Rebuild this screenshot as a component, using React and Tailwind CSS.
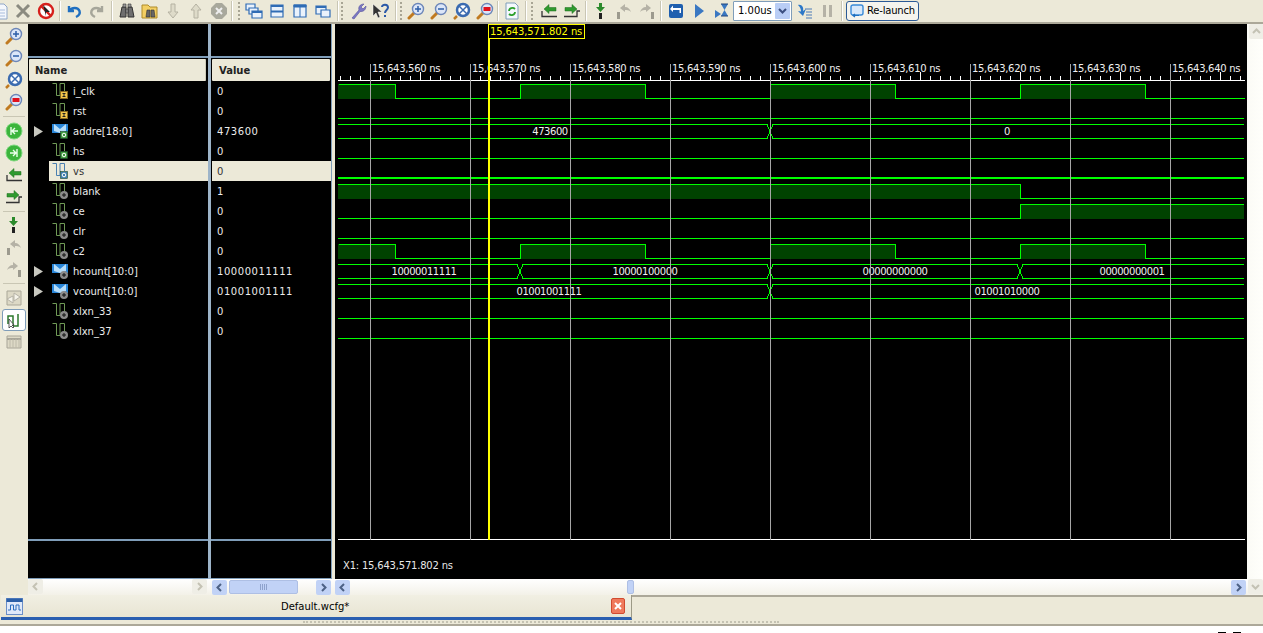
import React from "react";

const F = "font-['DejaVu_Sans',sans-serif]";

function Svg({ children, s = 18 }) {
  return <svg width={s} height={s} viewBox="0 0 18 18" fill="none">{children}</svg>;
}
const Lens = ({ inner }) => (
  <>
    <path d="M2 16 L7 11" stroke="#c07a20" strokeWidth="3" strokeLinecap="round" />
    <circle cx="11" cy="7" r="5.5" fill="#dce6f8" stroke="#6c86b8" strokeWidth="1.4" />
    {inner}
  </>
);
const Win = ({ d }) => <path d={d} stroke="#2f6cb5" fill="#eaf2fb" strokeWidth="1.2" />;

const icons = {
  doc: (
    <>
      <path d="M2 2H13L16 5V17H2Z" fill="#f4f7fc" stroke="#8fa6c8" />
      <path d="M4 8H14M4 11H14M4 14H14" stroke="#a8bcdc" />
    </>
  ),
  x: <path d="M3 3 15 15M15 3 3 15" stroke="#8b8b80" strokeWidth="3" />,
  noentry: (
    <>
      <circle cx="9" cy="9" r="7" fill="#fff" stroke="#d6201c" strokeWidth="2.4" />
      <path d="M4 4 14 14" stroke="#d6201c" strokeWidth="2.4" />
      <path d="M6 3 13 10 9 10 9 14Z" fill="#222" />
    </>
  ),
  undo: <path d="M4 4V9H9M4.5 8.5C7 5 13 5 14.5 9 15.5 12 13 14 11 15" stroke="#1f6fc0" strokeWidth="2.4" />,
  redo: <path d="M14 4V9H9M13.5 8.5C11 5 5 5 3.5 9 2.5 12 5 14 7 15" stroke="#a6a69a" strokeWidth="2.4" />,
  binoc: (
    <>
      <path d="M2 15 4 5H8V15ZM10 15V5H14L16 15Z" fill="#6f6f6f" stroke="#333" />
      <path d="M5 2H8V5H5ZM10 2H13V5H10ZM8 7H10V11H8Z" fill="#9a9a9a" stroke="#333" strokeWidth=".6" />
    </>
  ),
  folder: (
    <>
      <path d="M1 3H7L9 5H16V16H1Z" fill="#f3cf62" stroke="#b08c2a" />
      <path d="M5 15 6 8H9V15ZM10 15V8H13L14 15Z" fill="#666" stroke="#333" strokeWidth=".6" />
    </>
  ),
  down: <path d="M7 2H11V10H14L9 16 4 10H7Z" fill="#dedbc9" stroke="#b5b2a2" />,
  up: <path d="M7 16H11V8H14L9 2 4 8H7Z" fill="#dedbc9" stroke="#b5b2a2" />,
  stop: (
    <>
      <path d="M6 1H12L17 6V12L12 17H6L1 12V6Z" fill="#a8a89c" />
      <path d="M6 6 12 12M12 6 6 12" stroke="#eee" strokeWidth="2" />
    </>
  ),
  cascade: (
    <>
      <Win d="M1 2H10V8H1Z" />
      <Win d="M4 6H13V12H4Z" />
      <Win d="M7 9H17V16H7Z" />
      <path d="M7 9H17V11H7Z" fill="#2f6cb5" />
    </>
  ),
  hsplit: (
    <>
      <Win d="M3 3H15V15H3Z" />
      <path d="M3 3H15V5H3ZM3 8.5H15V10.5H3Z" fill="#2f6cb5" />
    </>
  ),
  vsplit: (
    <>
      <Win d="M3 3H15V15H3Z" />
      <path d="M3 3H15V5H3ZM9 5V15" stroke="#2f6cb5" fill="#2f6cb5" />
    </>
  ),
  minwin: (
    <>
      <Win d="M2 4H12V12H2Z" />
      <Win d="M7 8H16V15H7Z" />
      <path d="M2 4H12V6H2Z" fill="#2f6cb5" />
    </>
  ),
  wrench: <path d="M3 16 10 8C9 5 11 2 15 2L12 5 14 7 17 4C17 8 14 10 11 9.500L5 17Z" fill="#7b78c4" stroke="#55539a" strokeWidth=".6" />,
  help: (
    <>
      <path d="M1 2V14L4 11 6 16 8 15 6 10H10Z" fill="#333" stroke="#fff" strokeWidth=".5" />
      <path d="M10 5C10 2 16 2 16 5.500 16 8 13 8 13 11M13 13V15" stroke="#2c5aa8" strokeWidth="2" />
    </>
  ),
  zin: <Lens inner={<path d="M8 7H14M11 4V10" stroke="#2d5ea8" strokeWidth="1.5" />} />,
  zout: <Lens inner={<path d="M8 7H14" stroke="#2d5ea8" strokeWidth="1.5" />} />,
  zfit: (
    <>
      <path d="M1 17 4 14" stroke="#c07a20" strokeWidth="2.500" />
      <circle cx="10" cy="8" r="6" fill="#fff" stroke="#3b6bb0" strokeWidth="2.500" />
      <path d="M6 4 14 12M14 4 6 12" stroke="#3b6bb0" strokeWidth="1.5" />
    </>
  ),
  zarea: <Lens inner={<path d="M7.500 5H14.500V9H7.500Z" fill="#e0101c" />} />,
  refresh: (
    <>
      <path d="M3 1H12L15 4V17H3Z" fill="#f4f8fd" stroke="#7f9db9" />
      <path d="M6 9C6 6 10 5 12 7M12 10C12 13 8 14 6 12" stroke="#2ca02c" strokeWidth="1.800" />
    </>
  ),
  mback: (
    <>
      <path d="M2 9V14.500H17" stroke="#333" strokeWidth="1.300" />
      <path d="M4 7 9 2.500V5.500H16V9H9V11.500Z" fill="#2f9a2f" stroke="#1f6a1f" strokeWidth=".5" />
    </>
  ),
  mfwd: (
    <>
      <path d="M1 14.500H14V9H17" stroke="#333" strokeWidth="1.300" />
      <path d="M14 7 9 2.500V5.500H2V9H9V11.500Z" fill="#2f9a2f" stroke="#1f6a1f" strokeWidth=".5" />
    </>
  ),
  stepin: (
    <>
      <path d="M7 1H10V5H13L8.500 10 4 5H7Z" fill="#2c8a2c" />
      <path d="M7 11H10V17H7Z" fill="#222" />
    </>
  ),
  stepover: (
    <>
      <path d="M2 10H5V17H2Z" fill="#9c9a8e" />
      <path d="M5 6 10 2V5C13 5 15 7 16 10 14 8 12 8 10 8V10Z" fill="#b5b2a6" />
    </>
  ),
  stepout: (
    <>
      <path d="M13 10H16V17H13Z" fill="#9c9a8e" />
      <path d="M13 6 8 2V5C5 5 3 7 2 10 4 8 6 8 8 8V10Z" fill="#b5b2a6" />
    </>
  ),
  restart: (
    <>
      <rect x="2" y="2" width="14" height="14" rx="2" fill="#1f5fae" />
      <path d="M12.500 11H14V6H6V3.500L3 7 6 10V8H12.500Z" fill="#fff" />
    </>
  ),
  play: <path d="M5 2 14 9 5 16Z" fill="#3a78c2" />,
  runfor: (
    <>
      <path d="M2 8 8 12 2 16Z" fill="#3a78c2" />
      <path d="M8 2H15L11.500 8 15 14H8L11.500 8Z" fill="#3a78c2" />
      <path d="M8 2H15M8 14H15" stroke="#22467c" />
    </>
  ),
  runall: (
    <>
      <path d="M3 3C7 2 9 6 8 9L11 7 8 14 3 9 6 9.500C6 7 5 5 3 3Z" fill="#2c78c8" />
      <path d="M10 7H17M11 10H17M11 13H17M11 16H17" stroke="#4a7ab8" />
    </>
  ),
  pause: <path d="M5 3H8V15H5ZM11 3H14V15H11Z" fill="#b5b2a6" />,
  sim: (
    <>
      <path d="M2 2H16V16H2Z" fill="#ddd9c6" stroke="#aaa798" />
      <path d="M9 4 15 8 9 12ZM2 10 8 14 8 7Z" fill="#f6f4ea" stroke="#b5b2a6" />
    </>
  ),
  cursor: (
    <>
      <path d="M3 13V5H8V15H13V3" stroke="#2c7a2c" strokeWidth="1.500" />
      <path d="M4 8V17L6 15 8 17 9 16 7 14H9Z" fill="#fff" stroke="#333" strokeWidth=".8" />
    </>
  ),
  grid: (
    <>
      <path d="M2 3H16V15H2Z" fill="#ddd9c6" stroke="#a8a598" />
      <path d="M2 6H16" stroke="#a8a598" strokeWidth="2" />
      <path d="M5 6V15M8 6V15M11 6V15M14 6V15" stroke="#bdbaa9" />
    </>
  ),
  gback: (
    <>
      <circle cx="9" cy="9" r="8" fill="#3cb53c" stroke="#7ed87e" />
      <path d="M6 5V13M13 9H7M10 6 7 9 10 12" stroke="#eaffea" strokeWidth="1.400" />
    </>
  ),
  gfwd: (
    <>
      <circle cx="9" cy="9" r="8" fill="#3cb53c" stroke="#7ed87e" />
      <path d="M12 5V13M5 9H11M8 6 11 9 8 12" stroke="#eaffea" strokeWidth="1.400" />
    </>
  ),
};

const Btn = ({ i }) => (
  <div className="w-[23px] h-[22px] shrink-0 flex items-center justify-center">
    <Svg>{icons[i]}</Svg>
  </div>
);
const Line = () => <div className="w-px h-[20px] bg-[#c9c6b4] border-r border-white box-content" />;
const Grip = () => <div className="w-[2px] h-[18px] border-l-2 border-dotted border-[#a8a594]" />;
const Combo = () => (
  <div className="w-[59px] h-[20px] shrink-0 flex items-center justify-between bg-white border border-[#7f9db9] rounded-[1px] pl-1 pr-px">
    <span className={`${F} text-[10px] text-black`}>1.00us</span>
    <span className="w-[15px] h-[16px] bg-[#b9cdf5] rounded-[1px] flex items-center justify-center">
      <svg width="9" height="6" viewBox="0 0 9 6"><path d="M1 1 4.500 4.500 8 1" stroke="#3c4f80" strokeWidth="2" fill="none" /></svg>
    </span>
  </div>
);

function Toolbar() {
  return (
    <div className="h-[24px] shrink-0 flex items-center -ml-[12px] bg-[#ece9d8] border-b-2 border-[#aca899] pb-px overflow-hidden">
      <Btn i="doc" /><Btn i="x" /><Btn i="noentry" />
      <div className="w-[5px] shrink-0 flex justify-center"><Line /></div>
      <Btn i="undo" /><Btn i="redo" />
      <div className="w-[7px] shrink-0 flex justify-center"><Line /></div>
      <Btn i="binoc" /><Btn i="folder" /><Btn i="down" /><Btn i="up" /><Btn i="stop" />
      <div className="w-[12px] shrink-0 flex items-center gap-[5px] pl-px"><Line /><Grip /></div>
      <Btn i="cascade" /><Btn i="hsplit" /><Btn i="vsplit" /><Btn i="minwin" />
      <div className="w-[12px] shrink-0 flex items-center gap-[2px] pl-[3px]"><Line /><Grip /></div>
      <Btn i="wrench" /><Btn i="help" />
      <div className="w-[12px] shrink-0 flex items-center gap-[3px] pl-[3px]"><Line /><Grip /></div>
      <Btn i="zin" /><Btn i="zout" /><Btn i="zfit" /><Btn i="zarea" />
      <div className="w-[4px] shrink-0 flex justify-center"><Line /></div>
      <Btn i="refresh" />
      <div className="w-[14px] shrink-0 flex items-center gap-[4px] pl-[2px]"><Line /><Grip /></div>
      <Btn i="mback" /><Btn i="mfwd" />
      <div className="w-[6px] shrink-0 flex justify-center"><Line /></div>
      <Btn i="stepin" /><Btn i="stepover" /><Btn i="stepout" />
      <div className="w-[6px] shrink-0 flex justify-center"><Line /></div>
      <Btn i="restart" /><Btn i="play" /><Btn i="runfor" />
      <Combo />
      <Btn i="runall" /><Btn i="pause" />
      <div className="w-[8px] shrink-0 flex justify-center"><Line /></div>
      <div className="w-[73px] h-[20px] shrink-0 flex items-center gap-[3px] pl-[3px] bg-[#f5f4ee] border border-[#2c5a96] rounded-[3px]">
        <svg width="14" height="14" viewBox="0 0 14 14" fill="none" className="shrink-0">
          <rect x="1" y="1" width="12" height="10" rx="2" fill="#d8e8fa" stroke="#3a8ad8" strokeWidth="1.400" />
          <path d="M5 13 3 11.500 5 10M3 11.500H9" stroke="#1f6fc0" strokeWidth="1.200" />
        </svg>
        <span className={`${F} text-[10px] text-black whitespace-nowrap tracking-[-0.2px]`}>Re-launch</span>
      </div>
    </div>
  );
}

function SideBar() {
  const B = ({ i, sel }) => (
    <div className={`w-[24px] h-[22px] shrink-0 flex items-center justify-center ${sel ? "bg-white border border-[#7f9db9] rounded-[3px]" : ""}`}>
      <Svg>{icons[i]}</Svg>
    </div>
  );
  return (
    <div className="w-[28px] shrink-0 bg-[#ece9d8] flex flex-col items-center pt-[1px]">
      <B i="zin" /><B i="zout" /><B i="zfit" /><B i="zarea" />
      <div className="w-[22px] h-px bg-[#c9c6b4] mt-[3px] mb-[3px] shrink-0" />
      <B i="gback" /><B i="gfwd" /><B i="mback" /><B i="mfwd" />
      <div className="w-[22px] h-px bg-[#c9c6b4] mt-[3px] mb-[2px] shrink-0" />
      <B i="stepin" /><B i="stepover" /><B i="stepout" />
      <div className="w-[22px] h-px bg-[#c9c6b4] mt-[3px] mb-[3px] shrink-0" />
      <B i="sim" /><B i="cursor" sel /><B i="grid" />
    </div>
  );
}

const rows = [
  ["i_clk", "0", "sig", "in"],
  ["rst", "0", "sig", "in"],
  ["addre[18:0]", "473600", "bus", "out"],
  ["hs", "0", "sig", "out"],
  ["vs", "0", "sel", "outsel"],
  ["blank", "1", "sig", "int"],
  ["ce", "0", "sig", "int"],
  ["clr", "0", "sig", "int"],
  ["c2", "0", "sig", "int"],
  ["hcount[10:0]", "10000011111", "bus", "int"],
  ["vcount[10:0]", "01001001111", "bus", "int"],
  ["xlxn_33", "0", "sig", "int"],
  ["xlxn_37", "0", "sig", "int"],
];

function Badge({ t }) {
  if (t === "in")
    return (
      <>
        <rect x="8.500" y="8.500" width="7" height="7" fill="#f1c64c" stroke="#8a6a20" />
        <path d="M10.500 10.500H13.500M12 10.500V13.500M10.500 13.500H13.500" stroke="#222" />
      </>
    );
  if (t === "out" || t === "outsel") {
    const c = t === "out" ? "#3f9a3f" : "#3f7fb0";
    return (
      <>
        <rect x="8.500" y="8.500" width="7" height="7" fill={c} stroke="#1e4e2e" strokeWidth=".6" />
        <circle cx="12" cy="12" r="1.800" stroke="#fff" />
      </>
    );
  }
  return (
    <>
      <circle cx="12" cy="12" r="4" fill="#8a8a8a" />
      <path d="M10 12H14M12 10V14" stroke="#111" />
    </>
  );
}

function SigIcon({ kind, badge }) {
  const stroke = kind === "sel" ? "#4a7fb0" : "#6f9a55";
  return (
    <svg width="16" height="16" viewBox="0 0 16 16" fill="none" className="shrink-0">
      {kind === "bus" ? (
        <>
          <path d="M0 1H16V10H0Z" fill="#2a86d8" />
          <path d="M2 1 8 6 14 1V8L8 10 2 8Z" fill="#b8ddf8" />
        </>
      ) : (
        <path d="M.5 .5H4.500V12.500H8V.5H12.500V8" stroke={stroke} />
      )}
      <Badge t={badge} />
    </svg>
  );
}

const ExpArrow = () => (
  <svg width="9" height="11" viewBox="0 0 9 11"><path d="M0 0 9 5.500 0 11Z" fill="#c8c8c0" /></svg>
);

function Col({ w, head, children, right }) {
  return (
    <div className={`${w} shrink-0 flex flex-col bg-black ${right}`}>
      <div className="h-[32px] shrink-0" />
      <div className="h-[2px] shrink-0 bg-[#7f9db9]" />
      <div className="h-[23px] shrink-0 pt-px px-px">{head}</div>
      <div className="flex-1">{children}</div>
      <div className="h-[2px] shrink-0 bg-[#7f9db9]" />
      <div className="h-[38px] shrink-0 border-b border-[#7f9db9]" />
    </div>
  );
}

function NameCol() {
  return (
    <Col
      w="w-[180px]"
      right="border-r-[3px] border-[#9db4c9] box-content"
      head={
        <div className={`${F} h-[22px] bg-[#ece9d8] rounded-[1px] flex items-center pl-[6px] text-[10px] font-bold text-[#222] border-r border-[#cfccb8] mr-px`}>
          Name
        </div>
      }
    >
      {rows.map(([n, , k, b]) => (
        <div key={n} className="h-5 flex">
          <div className="w-[21px] pl-[6px] shrink-0 flex items-center">{k === "bus" && <ExpArrow />}</div>
          <div className={`flex-1 flex items-center gap-[5px] pl-[3px] ${k === "sel" ? "bg-[#ece9d8]" : ""}`}>
            <SigIcon kind={k} badge={b} />
            <span className={`${F} text-[10px] ${k === "sel" ? "text-[#333]" : "text-[#ececec]"}`}>{n}</span>
          </div>
        </div>
      ))}
    </Col>
  );
}

function ValueCol() {
  return (
    <Col
      w="w-[120px]"
      right="border-r border-[#7f9db9] box-content"
      head={
        <div className={`${F} h-[22px] bg-[#ece9d8] rounded-[1px] flex items-center pl-[7px] text-[10px] font-bold text-[#222]`}>
          Value
        </div>
      }
    >
      <div className="pl-px">
        {rows.map(([n, v, k]) => (
          <div
            key={n}
            className={`${F} h-5 flex items-center pl-[5px] text-[10px] tracking-[0.55px] ${k === "sel" ? "bg-[#ece9d8] text-[#333]" : "text-[#ececec]"}`}
          >
            {v}
          </div>
        ))}
      </div>
    </Col>
  );
}

const G = "#00ff00";
const Dark = "#004200";
const X0 = 338, X1 = 1244;

function Clock({ top }) {
  const bot = top + 14;
  const edges = [395, 520, 645, 770, 895, 1020, 1145];
  let high = true, prev = X0, d = `M${X0} ${top}`;
  const fills = [];
  edges.concat(X1).forEach((e) => {
    if (high) fills.push([prev, e]);
    d += `H${e}`;
    if (e !== X1) d += `V${high ? bot : top}`;
    high = !high;
    prev = e;
  });
  return (
    <g>
      {fills.map(([a, b]) => <rect key={a} x={a} y={top} width={b - a} height={15} fill={Dark} />)}
      <path d={d} stroke={G} fill="none" transform="translate(0.5 0.5)" />
    </g>
  );
}

function Bus({ top, trans, labels }) {
  const bot = top + 14;
  const pts = [X0, ...trans, X1];
  const segs = [];
  for (let i = 0; i < pts.length - 1; i++) {
    const a = i === 0 ? pts[i] : pts[i] + 3;
    const b = i === pts.length - 2 ? pts[i + 1] : pts[i + 1] - 3;
    segs.push(<path key={i} d={`M${a} ${top + 0.5}H${b}M${a} ${bot + 0.5}H${b}`} stroke={G} />);
  }
  return (
    <g>
      {segs}
      {trans.map((t) => (
        <path key={t} d={`M${t - 3} ${top + 0.5}L${t + 3} ${bot + 0.5}M${t - 3} ${bot + 0.5}L${t + 3} ${top + 0.5}`} stroke={G} />
      ))}
      {labels.map(([x, s]) => (
        <text key={x} x={x} y={top + 11} textAnchor="middle" className={`${F} text-[10px] tracking-[-0.45px] fill-[#f0f0f0]`}>{s}</text>
      ))}
    </g>
  );
}

function Low({ y, w = 1 }) {
  return <path d={`M${X0} ${y}H${X1}`} stroke={G} strokeWidth={w} />;
}

function Wave() {
  const majors = [370, 470, 570, 670, 770, 870, 970, 1070, 1170];
  const ticks = [];
  for (let x = 340; x <= 1240; x += 10) {
    const h = x % 100 === 70 ? 0 : x % 100 === 20 ? 8 : 4;
    if (h) ticks.push(<path key={x} d={`M${x + 0.5} 80V${80 - h}`} stroke="#fff" />);
  }
  return (
    <div className="w-[912px] shrink-0 bg-black">
      <svg width="912" height="555" viewBox="335 24 912 555" className="block" shapeRendering="crispEdges">
        <path d="M338 80.500H1245" stroke="#fff" />
        {ticks}
        {majors.map((x) => (
          <g key={x}>
            <path d={`M${x + 0.5} 64V540`} stroke="#a6a6a6" />
            <text x={x + 2} y={72} shapeRendering="auto" className={`${F} text-[10px] tracking-[-0.3px] fill-[#f0f0f0]`}>
              {`15,643,${560 + (x - 370) / 10} ns`}
            </text>
          </g>
        ))}
        <path d="M338 539.500H1245" stroke="#fff" />

        <Clock top={84} />
        <Low y={118.5} />
        <Bus top={124} trans={[770]} labels={[[550, "473600"], [1007, "0"]]} />
        <Low y={158.5} />
        <Low y={178} w={2} />
        <rect x={338} y={184} width={682} height={15} fill={Dark} />
        <path d="M338 184.500H1020.500V198.500H1244" stroke={G} fill="none" />
        <path d="M338 218.500H1020.500V204.500H1244" stroke={G} fill="none" />
        <rect x={1021} y={205} width={223} height={14} fill={Dark} />
        <Low y={238.5} />
        <Clock top={244} />
        <Bus
          top={264}
          trans={[520, 770, 1020]}
          labels={[[424, "10000011111"], [645, "10000100000"], [895, "00000000000"], [1132, "00000000001"]]}
        />
        <Bus top={284} trans={[770]} labels={[[549, "01001001111"], [1007, "01001010000"]]} />
        <Low y={318.5} />
        <Low y={338.5} />

        {majors.map((x) => <path key={x} d={`M${x + 0.5} 84V540`} stroke="#a6a6a6" />)}

        <path d="M489 38V540" stroke="#ffff00" strokeWidth="2" />
        <rect x={488.5} y={24.5} width={96} height={14} fill="#000" stroke="#ffff00" />
        <text x={490} y={35} shapeRendering="auto" className={`${F} text-[10px] tracking-[-0.12px] fill-[#ffff00]`}>
          15,643,571.802 ns
        </text>
        <text x={343} y={569} shapeRendering="auto" className={`${F} text-[10px] tracking-[-0.2px] fill-[#e8e8e8]`}>
          X1: 15,643,571.802 ns
        </text>
      </svg>
    </div>
  );
}

const SBtn = ({ dir, on, className = "" }) => (
  <div className={`w-[15px] h-[15px] shrink-0 rounded-[2px] flex items-center justify-center ${on ? "bg-[#c1d2f6]" : "bg-[#efeee6]"} ${className}`}>
    <svg width="9" height="9" viewBox="0 0 9 9" fill="none">
      <path
        d={dir === "l" ? "M6 1 2.500 4.500 6 8" : dir === "r" ? "M3 1 6.500 4.500 3 8" : dir === "u" ? "M1 6 4.500 2.500 8 6" : "M1 3 4.500 6.500 8 3"}
        stroke={on ? "#4d6185" : "#c4c2b4"}
        strokeWidth="2"
      />
    </svg>
  </div>
);

function HBars() {
  return (
    <div className="h-[16px] shrink-0 flex bg-gradient-to-b from-[#ffffff] to-[#f3f1e8]">
      <div className="w-[28px] shrink-0 bg-[#ece9d8]" />
      <div className="w-[180px] shrink-0 flex justify-between pr-px">
        <SBtn dir="l" /><SBtn dir="r" />
      </div>
      <div className="w-[3px] shrink-0" />
      <div className="w-[121px] shrink-0 flex items-center pl-px pr-[1px]">
        <SBtn dir="l" on />
        <div className="ml-[2px] w-[69px] h-[14px] rounded-[2px] bg-[#c1d2f6] border border-[#aebfe4] flex items-center justify-center gap-px">
          <i className="w-px h-[6px] bg-[#8ea2cc]" /><i className="w-px h-[6px] bg-[#8ea2cc]" /><i className="w-px h-[6px] bg-[#8ea2cc]" /><i className="w-px h-[6px] bg-[#8ea2cc]" />
        </div>
        <div className="flex-1" />
        <SBtn dir="r" on />
      </div>
      <div className="w-[3px] shrink-0" />
      <div className="w-[912px] shrink-0 flex items-center pr-px">
        <SBtn dir="l" on />
        <div className="ml-[277px] w-[7px] h-[14px] rounded-[2px] bg-[#c1d2f6] border border-[#aebfe4]" />
        <div className="flex-1" />
        <SBtn dir="r" on />
      </div>
      <div className="w-[16px] shrink-0 pl-px"><SBtn dir="d" /></div>
    </div>
  );
}

function TabBar() {
  return (
    <div className="h-[31px] shrink-0 bg-[#ece9d8] flex flex-col">
      <div className="h-[25px] shrink-0 flex">
        <div className="w-[631px] shrink-0 ml-px h-[25px] bg-gradient-to-b from-[#f1efe3] to-[#e8e5d3] border-b-[3px] border-[#2a5fb0] border-r border-r-[#9c9a86] flex items-center relative">
          <div className="ml-[5px] shrink-0">
            <svg width="17" height="17" viewBox="0 0 17 17" fill="none">
              <rect x=".5" y=".5" width="16" height="16" fill="#dfe9fa" stroke="#6a8ec8" />
              <path d="M.5 .5H16.500V4H.5Z" fill="#2a5fa8" />
              <path d="M2 12H4.500V7H7.500V12H10V7H13V12H15" stroke="#2a6ec0" />
            </svg>
          </div>
          <span className={`${F} text-[10px] text-black ml-[258px] flex-1`}>Default.wcfg*</span>
          <div className="w-[14px] h-[16px] mr-[6px] rounded-[2px] bg-[#ef7a5c] border border-[#d14b30] flex items-center justify-center">
            <svg width="8" height="8" viewBox="0 0 8 8"><path d="M1 1 7 7M7 1 1 7" stroke="#fff" strokeWidth="2" /></svg>
          </div>
        </div>
        <div className="flex-1 border-t-2 border-[#aca899]" />
      </div>
      <div className="h-[6px] shrink-0 border-b-2 border-[#aca899] pl-[303px]">
        <div className="w-[476px] h-[2px] border-t-2 border-dotted border-[#c4c2b2] mt-px" />
      </div>
    </div>
  );
}

export default function App() {
  return (
    <div className="w-[1263px] h-[633px] overflow-hidden flex flex-col bg-white relative">
      <Toolbar />
      <div className="h-[555px] shrink-0 flex bg-[#ece9d8]">
        <SideBar />
        <NameCol />
        <ValueCol />
        <div className="w-[3px] shrink-0" />
        <Wave />
        <div className="w-[16px] shrink-0 bg-gradient-to-r from-[#fbfbf6] to-[#fffffb] pl-[2px]">
          <SBtn dir="u" />
        </div>
      </div>
      <HBars />
      <TabBar />
      <div className="flex-1 bg-white flex justify-end items-end gap-[7px] pr-[22px]">
        <i className="w-[8px] h-[1px] bg-black" /><i className="w-[8px] h-[1px] bg-black" />
      </div>
    </div>
  );
}
